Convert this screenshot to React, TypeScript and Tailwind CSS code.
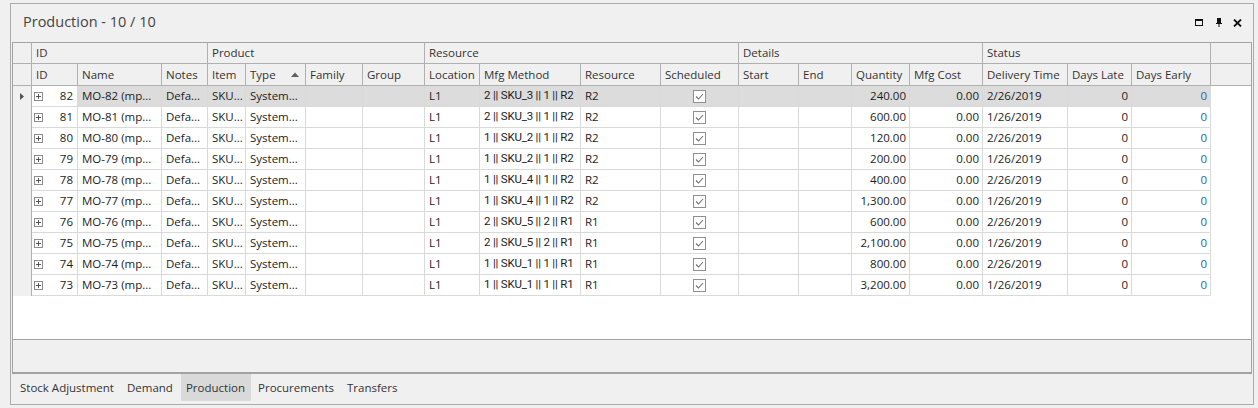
const font = "font-['Open_Sans','Noto_Sans',sans-serif]"

interface Col {
	key: string
	title: string
	w: string
	align?: 'right' | 'center'
	color?: string
}

const cols: Col[] = [
	{ key: 'id', title: 'ID', w: 'w-[46px]', align: 'right' },
	{ key: 'name', title: 'Name', w: 'w-[84px]' },
	{ key: 'notes', title: 'Notes', w: 'w-[46px]' },
	{ key: 'item', title: 'Item', w: 'w-[38px]' },
	{ key: 'type', title: 'Type', w: 'w-[60px]' },
	{ key: 'family', title: 'Family', w: 'w-[57px]' },
	{ key: 'group', title: 'Group', w: 'w-[62px]' },
	{ key: 'loc', title: 'Location', w: 'w-[55px]' },
	{ key: 'method', title: 'Mfg Method', w: 'w-[101px]' },
	{ key: 'res', title: 'Resource', w: 'w-[80px]' },
	{ key: 'sched', title: 'Scheduled', w: 'w-[78px]', align: 'center' },
	{ key: 'start', title: 'Start', w: 'w-[60px]' },
	{ key: 'end', title: 'End', w: 'w-[53px]' },
	{ key: 'qty', title: 'Quantity', w: 'w-[58px]', align: 'right' },
	{ key: 'cost', title: 'Mfg Cost', w: 'w-[73px]', align: 'right' },
	{ key: 'del', title: 'Delivery Time', w: 'w-[85px]' },
	{ key: 'late', title: 'Days Late', w: 'w-[64px]', align: 'right' },
	{ key: 'early', title: 'Days Early', w: 'w-[79px]', align: 'right', color: 'text-[#1f5fb8]' },
]

const groups = [
	{ title: 'ID', w: 'w-[176px]' },
	{ title: 'Product', w: 'w-[217px]' },
	{ title: 'Resource', w: 'w-[314px]' },
	{ title: 'Details', w: 'w-[244px]' },
	{ title: 'Status', w: 'w-[228px]' },
]

const rows = [
	[82, '2 || SKU_3 || 1 || R2', 'R2', '240.00', '2/26/2019'],
	[81, '2 || SKU_3 || 1 || R2', 'R2', '600.00', '1/26/2019'],
	[80, '1 || SKU_2 || 1 || R2', 'R2', '120.00', '2/26/2019'],
	[79, '1 || SKU_2 || 1 || R2', 'R2', '200.00', '1/26/2019'],
	[78, '1 || SKU_4 || 1 || R2', 'R2', '400.00', '2/26/2019'],
	[77, '1 || SKU_4 || 1 || R2', 'R2', '1,300.00', '1/26/2019'],
	[76, '2 || SKU_5 || 2 || R1', 'R1', '600.00', '2/26/2019'],
	[75, '2 || SKU_5 || 2 || R1', 'R1', '2,100.00', '1/26/2019'],
	[74, '1 || SKU_1 || 1 || R1', 'R1', '800.00', '2/26/2019'],
	[73, '1 || SKU_1 || 1 || R1', 'R1', '3,200.00', '1/26/2019'],
]

function Expander() {
	return (
		<svg width="9" height="9" viewBox="0 0 9 9" className="shrink-0">
			<rect x="0.5" y="0.5" width="8" height="8" fill="white" stroke="#8c8c8c" />
			<path d="M2 4.5h5M4.5 2v5" stroke="#555" />
		</svg>
	)
}

function Check() {
	return (
		<svg width="13" height="13" viewBox="0 0 13 13">
			<rect x="0.5" y="0.5" width="12" height="12" fill="white" stroke="#8f8f8f" />
			<path d="M3 6.5l2.5 2.5 4.5-5" fill="none" stroke="#707070" strokeWidth="1.1" />
		</svg>
	)
}

function cellValue(key: string, r: (string | number)[]) {
	const [id, method, res, qty, del] = r
	switch (key) {
		case 'id':
			return (
				<div className="flex items-center w-full">
					<Expander />
					<span className="ml-auto">{id}</span>
				</div>
			)
		case 'name': return `MO-${id} (mp...`
		case 'notes': return 'Defa...'
		case 'item': return 'SKU...'
		case 'type': return 'System...'
		case 'loc': return 'L1'
		case 'method': return <span className="font-['Roboto',sans-serif] text-[11.5px] tracking-[-0.2px]">{method}</span>
		case 'res': return res
		case 'sched': return <Check />
		case 'qty': return qty
		case 'cost': return '0.00'
		case 'del': return del
		case 'late': return '0'
		case 'early': return '0'
		default: return ''
	}
}

export default function App() {
	return (
		<div className={`w-[1258px] h-[408px] bg-[#f0f0f0] pl-[10px] pt-[3px] text-[11.5px] ${font}`}>
			<div className="w-[1244px] h-[402px] border border-[#ababab] flex flex-col">
				{/* title bar */}
				<div className="h-[38px] flex items-center pl-[12px] pr-[11px] shrink-0">
					<span className="text-[14.5px] text-[#444] pb-[2px]">Production - 10 / 10</span>
					<div className="ml-auto flex items-center pb-[1px]">
						<svg width="8" height="7" viewBox="0 0 8 7">
							<rect x="0.5" y="0.5" width="7" height="6" fill="none" stroke="#111" />
							<rect x="0" y="0" width="8" height="2" fill="#111" />
						</svg>
						<svg width="6" height="9" viewBox="0 0 6 9" className="ml-[13px]">
							<rect x="1" y="0" width="4" height="5" fill="#111" />
							<rect x="0" y="5" width="6" height="1" fill="#111" />
							<rect x="2.5" y="6" width="1" height="3" fill="#111" />
						</svg>
						<svg width="9" height="8" viewBox="0 0 9 8" className="ml-[11px]">
							<path d="M1 0.5l7 7M8 0.5l-7 7" stroke="#111" strokeWidth="1.8" />
						</svg>
					</div>
				</div>

				{/* grid */}
				<div className="ml-[1px] w-[1240px] h-[332px] border border-b-2 border-[#a3a3a3] bg-white flex flex-col shrink-0">
					<div className="bg-[#f0f0f0] text-[#333]">
						<div className="flex h-[21px] border-b border-[#b0b0b0]">
							<div className="w-[19px] border-r border-[#b0b0b0]" />
							{groups.map((g) => (
								<div key={g.title} className={`${g.w} border-r border-[#b0b0b0] px-[4px] flex items-center`}>{g.title}</div>
							))}
							<div className="flex-1" />
						</div>
						<div className="flex h-[22px] border-b border-[#b0b0b0]">
							<div className="w-[19px] border-r border-[#b0b0b0]" />
							{cols.map((c) => (
								<div key={c.key} className={`${c.w} shrink-0 border-r border-[#b0b0b0] px-[4px] flex items-center whitespace-nowrap overflow-hidden`}>
									{c.title}
									{c.key === 'type' && (
										<svg width="8" height="5" viewBox="0 0 8 5" className="ml-auto mr-[2px]">
											<path d="M0 5L4 0.5L8 5Z" fill="#606060" />
										</svg>
									)}
								</div>
							))}
							<div className="flex-1" />
						</div>
					</div>

					{rows.map((r, i) => {
						const sel = i === 0
						return (
							<div key={r[0]} className="flex h-[21px] text-[#1c1c1c]">
								<div className="w-[19px] shrink-0 bg-[#f0f0f0] border-r border-[#b0b0b0] flex items-center justify-center">
									{sel && (
										<svg width="4" height="7" viewBox="0 0 4 7">
											<path d="M0 0L4 3.5L0 7Z" fill="#555" />
										</svg>
									)}
								</div>
								{cols.map((c) => (
									<div
										key={c.key}
										className={`${c.w} shrink-0 border-r border-b border-[#d9d9d9] flex items-center whitespace-nowrap overflow-hidden ${c.key === 'id' ? 'pl-[2px] pr-[4px]' : 'px-[4px]'} ${c.align === 'right' ? 'justify-end pr-[3px]' : c.align === 'center' ? 'justify-center' : ''} ${sel && c.key !== 'id' ? 'bg-[#dcdcdc]' : ''} ${c.color ?? ''}`}
									>
										{cellValue(c.key, r)}
									</div>
								))}
							</div>
						)
					})}

					<div className="flex-1" />
					<div className="h-[33px] border-t border-[#a3a3a3] bg-[#f0f0f0] shrink-0" />
				</div>

				{/* tabs */}
				<div className="flex gap-[2px] h-[27px] pl-[4px] text-[#333]">
					{['Stock Adjustment', 'Demand', 'Production', 'Procurements', 'Transfers'].map((t) => (
						<div key={t} className={`pl-[5px] pr-[6px] flex items-center pt-[1px] ${t === 'Production' ? 'bg-[#d9d9d9]' : ''}`}>{t}</div>
					))}
				</div>
			</div>
		</div>
	)
}
